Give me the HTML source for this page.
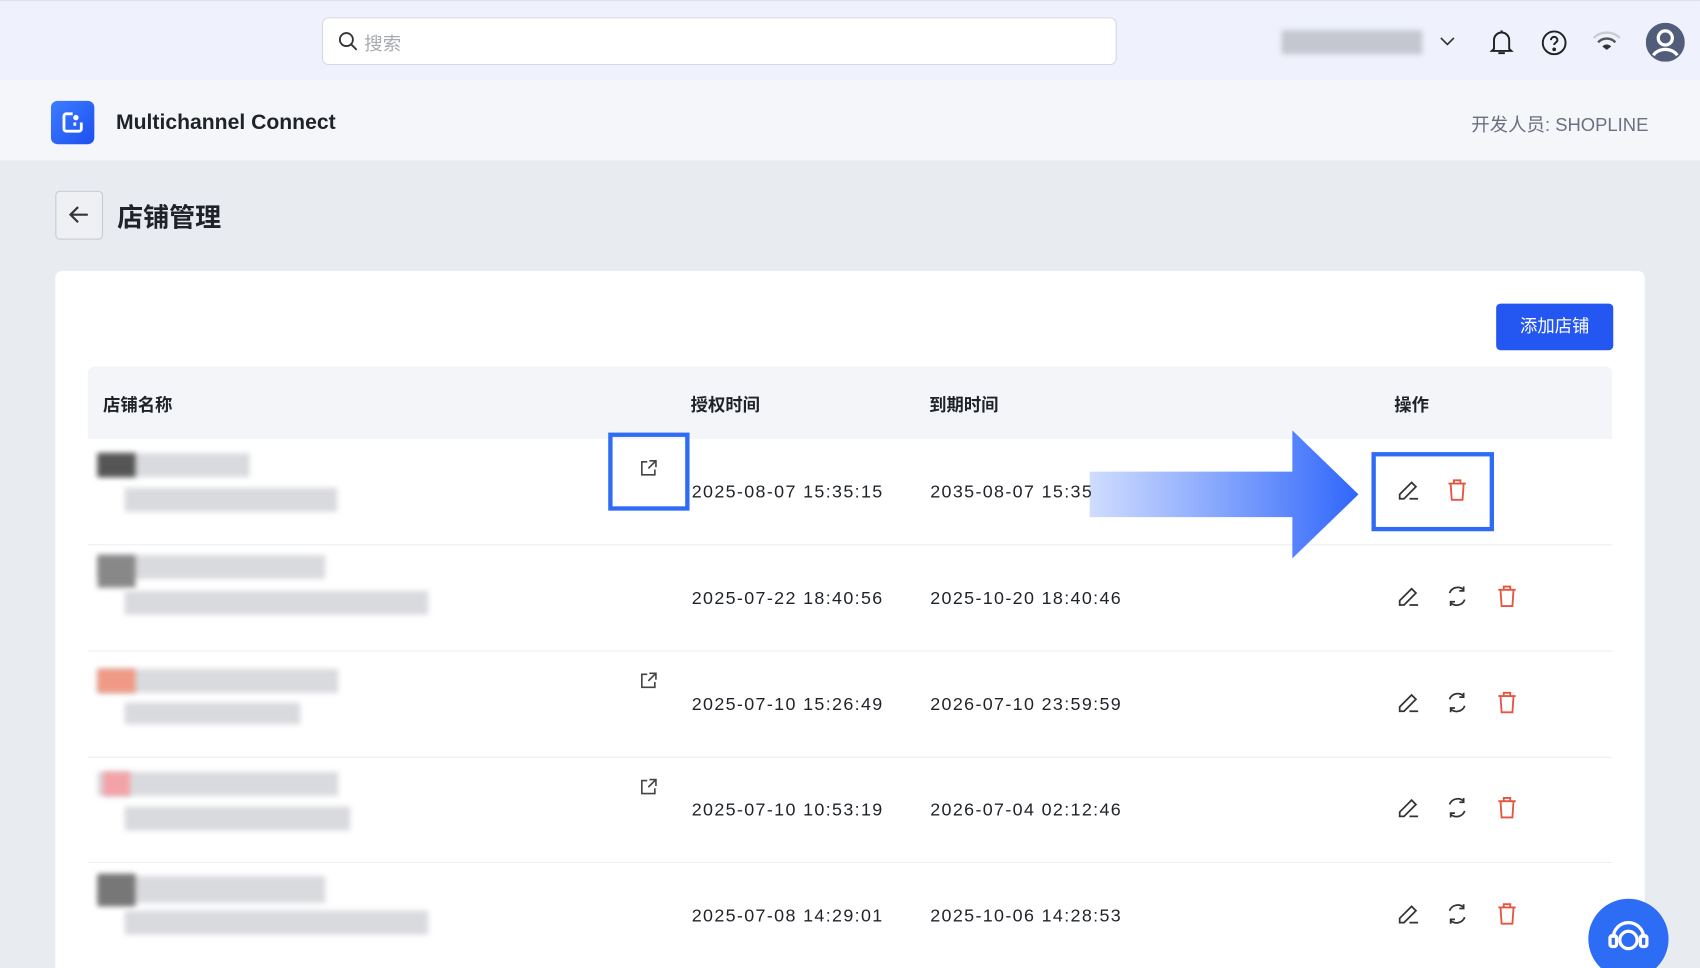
<!DOCTYPE html>
<html><head><meta charset="utf-8"><style>
html,body{margin:0;padding:0;width:1700px;height:968px;overflow:hidden;background:#e8ebf0}
#w{width:1568px;height:893px;transform:scale(1.08418);transform-origin:0 0;position:relative;font-family:"Liberation Sans","Noto Sans CJK SC",sans-serif;color:#1f2329}
.a{position:absolute}
.top{left:0;top:0;width:1568px;height:74px;background:#eff2fc;border-top:1px solid #dde0e8}
.sub{left:0;top:74px;width:1568px;height:74px;background:#f5f6fa}
.card{left:51px;top:250px;width:1466px;height:660px;background:#fff;border-radius:6px}
.th{left:81px;top:338px;width:1406px;height:67px;background:#f3f5f9;border-radius:6px 6px 0 0;font-size:16px;font-weight:bold}
.row{left:81px;width:1406px;border-bottom:1px solid #eceef2;height:97px}
.d{position:absolute;font-size:16.5px;color:#1f2329;letter-spacing:1.25px}
.blur{position:absolute;filter:blur(2.5px);background:#d9dade}
</style></head><body><div id="w">
<div class="a top">
 <div class="a" style="left:297px;top:15px;width:731px;height:42px;background:#fff;border:1px solid #d5d8e0;border-radius:6px">
  <svg class="a" style="left:14px;top:12px" width="18" height="18" viewBox="0 0 18 18" fill="none" stroke="#333" stroke-width="1.7"><circle cx="7.5" cy="7.5" r="6"/><path d="M12 12l5 5"/></svg>
  <span class="a" style="left:38px;top:9px;font-size:17px;color:#a8abb3">搜索</span>
 </div>
 <div class="blur" style="left:1182px;top:27px;width:130px;height:22px;background:#c4c6d0"></div>
 <svg class="a" style="left:1327px;top:31px" width="16" height="12" viewBox="0 0 16 12" fill="none" stroke="#333" stroke-width="1.6"><path d="M2 3l6 6 6-6"/></svg>
 <svg class="a" style="left:1373px;top:25px" width="24" height="26" viewBox="0 0 24 26" fill="none" stroke="#222" stroke-width="1.8"><path d="M5 19V11a7 7 0 0114 0v8l2 2H3z M12 2v2 M9 23h6"/></svg>
 <svg class="a" style="left:1421px;top:26px" width="25" height="25" viewBox="0 0 25 25" fill="none" stroke="#222" stroke-width="1.8"><circle cx="12.5" cy="12.5" r="10.5"/><path d="M9.5 10a3 3 0 116 0c0 2-3 2.5-3 4.5"/><circle cx="12.5" cy="18.5" r=".8" fill="#222"/></svg>
 <svg class="a" style="left:1468px;top:27px" width="28" height="22" viewBox="0 0 28 22"><path d="M2 7a17 17 0 0124 0" stroke="#c9cbd3" stroke-width="2.2" fill="none"/><path d="M6 11a11 11 0 0116 0" stroke="#555" stroke-width="2.2" fill="none"/><path d="M10 15a5 5 0 018 0l-4 3z" fill="#333"/></svg>
 <svg class="a" style="left:1518px;top:20px" width="36" height="36" viewBox="0 0 36 36"><circle cx="18" cy="18" r="18" fill="#515d7a"/><circle cx="18" cy="14" r="6.5" fill="none" stroke="#fff" stroke-width="3"/><path d="M7 30a12 9 0 0122 0" fill="none" stroke="#fff" stroke-width="3"/></svg>
</div>
<div class="a sub">
 <div class="a" style="left:47px;top:19px;width:40px;height:40px;border-radius:6px;background:linear-gradient(135deg,#3d7dff,#1c4ff0)">
  <svg class="a" style="left:9px;top:9px" width="22" height="22" viewBox="0 0 22 22" fill="none" stroke="#fff" stroke-width="2.6"><path d="M11 3H5a2 2 0 00-2 2v12a2 2 0 002 2h12a2 2 0 002-2v-6"/><path d="M13 11v3"/><circle cx="14" cy="6.5" r="1.2" fill="#fff"/></svg>
 </div>
 <span class="a" style="left:107px;top:28px;font-size:19.5px;font-weight:bold;color:#1f2329">Multichannel Connect</span>
 <span class="a" style="left:1357px;top:27px;font-size:17px;color:#6b7080">开发人员: SHOPLINE</span>
</div>
<div class="a" style="left:51px;top:176px;width:42px;height:43px;border:1px solid #c8cbd3;border-radius:4px;background:#eef0f4">
 <svg class="a" style="left:11px;top:12px" width="20" height="18" viewBox="0 0 20 18" fill="none" stroke="#333" stroke-width="2"><path d="M18 9H3 M9 2L2 9l7 7"/></svg>
</div>
<span class="a" style="left:108px;top:181px;font-size:24px;font-weight:bold">店铺管理</span>
<div class="a card"></div>
<div class="a" style="left:1380px;top:280px;width:108px;height:43px;background:#2457f2;border-radius:4px;color:#fff;font-size:16px;text-align:center;line-height:43px">添加店铺</div>
<div class="a th"><span class="a" style="left:14px;top:22px">店铺名称</span><span class="a" style="left:556px;top:22px">授权时间</span><span class="a" style="left:776px;top:22px">到期时间</span><span class="a" style="left:1205px;top:22px">操作</span></div>
<div class="a row" style="top:405px"></div>
<div class="a row" style="top:503px"></div>
<div class="a row" style="top:601px"></div>
<div class="a row" style="top:698px"></div>
<div class="a row" style="top:796px"></div>
<div class="blur" style="left:90px;top:418px;width:140px;height:22px"></div><div class="blur" style="left:90px;top:418px;width:35px;height:22px;background:#555"></div><div class="blur" style="left:115px;top:450px;width:196px;height:22px"></div>
<div class="blur" style="left:90px;top:512px;width:210px;height:22px"></div><div class="blur" style="left:90px;top:512px;width:35px;height:30px;background:#888"></div><div class="blur" style="left:115px;top:545px;width:280px;height:22px"></div>
<div class="blur" style="left:90px;top:617px;width:222px;height:22px"></div><div class="blur" style="left:90px;top:617px;width:35px;height:22px;background:#f09a85"></div><div class="blur" style="left:115px;top:648px;width:162px;height:20px"></div>
<div class="blur" style="left:90px;top:712px;width:222px;height:22px"></div><div class="blur" style="left:95px;top:712px;width:25px;height:22px;background:#f3a3a8"></div><div class="blur" style="left:115px;top:744px;width:208px;height:22px"></div>
<div class="blur" style="left:90px;top:808px;width:210px;height:25px"></div><div class="blur" style="left:90px;top:806px;width:35px;height:30px;background:#777"></div><div class="blur" style="left:115px;top:840px;width:280px;height:22px"></div>
<svg class="a" style="left:590px;top:424px" width="16" height="16" viewBox="0 0 16 16" fill="none" stroke="#444" stroke-width="1.5"><path d="M7 2H2v12h12V9 M9 1h6v6 M15 1L8 8"/></svg>
<svg class="a" style="left:590px;top:620px" width="16" height="16" viewBox="0 0 16 16" fill="none" stroke="#444" stroke-width="1.5"><path d="M7 2H2v12h12V9 M9 1h6v6 M15 1L8 8"/></svg>
<svg class="a" style="left:590px;top:718px" width="16" height="16" viewBox="0 0 16 16" fill="none" stroke="#444" stroke-width="1.5"><path d="M7 2H2v12h12V9 M9 1h6v6 M15 1L8 8"/></svg>
<div class="a" style="left:561px;top:399px;width:67px;height:64px;border:4px solid #2f6bf5"></div>
<span class="d" style="left:638px;top:445px">2025-08-07 15:35:15</span><span class="d" style="left:858px;top:445px">2035-08-07 15:35</span>
<span class="d" style="left:638px;top:543px">2025-07-22 18:40:56</span><span class="d" style="left:858px;top:543px">2025-10-20 18:40:46</span>
<span class="d" style="left:638px;top:641px">2025-07-10 15:26:49</span><span class="d" style="left:858px;top:641px">2026-07-10 23:59:59</span>
<span class="d" style="left:638px;top:738px">2025-07-10 10:53:19</span><span class="d" style="left:858px;top:738px">2026-07-04 02:12:46</span>
<span class="d" style="left:638px;top:836px">2025-07-08 14:29:01</span><span class="d" style="left:858px;top:836px">2025-10-06 14:28:53</span>
<svg class="a" style="left:1005px;top:397px" width="250" height="118" viewBox="0 0 250 118"><defs><linearGradient id="g" x1="0" x2="1"><stop offset="0" stop-color="#3f74fb" stop-opacity=".25"/><stop offset="1" stop-color="#2f66fb"/></linearGradient></defs><path d="M0 38H187V0L248 59 187 118V80H0z" fill="url(#g)"/></svg>
<div class="a" style="left:1265px;top:417px;width:105px;height:65px;border:4px solid #2f6bf5"></div>
<svg class="a" style="left:1288px;top:441px" width="22" height="22" viewBox="0 0 22 22" fill="none" stroke="#333" stroke-width="1.6"><path d="M3 19v-4L14 4l4 4L7 19z M12 19h8"/></svg>
<svg class="a" style="left:1334px;top:441px" width="20" height="22" viewBox="0 0 20 22" fill="none" stroke="#e5553f" stroke-width="1.7"><path d="M2 5h16 M7 5V2h6v3 M4 5l1 15h10l1-15"/></svg>
<div id="acts"></div>
<script>
var ys=[539,637,734,832],h='';
ys.forEach(function(y){h+='<svg class="a" style="left:1288px;top:'+y+'px" width="22" height="22" viewBox="0 0 22 22" fill="none" stroke="#333" stroke-width="1.6"><path d="M3 19v-4L14 4l4 4L7 19z M12 19h8"/></svg>'+
'<svg class="a" style="left:1333px;top:'+y+'px" width="22" height="22" viewBox="0 0 22 22" fill="none" stroke="#333" stroke-width="1.6"><path d="M4 8a8 8 0 0113-3 M18 14a8 8 0 01-13 3 M17 2v4h-4 M5 20v-4h4"/></svg>'+
'<svg class="a" style="left:1380px;top:'+y+'px" width="20" height="22" viewBox="0 0 20 22" fill="none" stroke="#e5553f" stroke-width="1.7"><path d="M2 5h16 M7 5V2h6v3 M4 5l1 15h10l1-15"/></svg>';});
document.getElementById('acts').innerHTML=h;
</script>
<div class="a" style="left:1465px;top:829px;width:74px;height:74px;border-radius:50%;background:#2d6cf5">
 <svg class="a" style="left:16px;top:14px" width="42" height="42" viewBox="0 0 42 42" fill="none" stroke="#fff" stroke-width="3"><path d="M7 22a14 14 0 0128 0"/><rect x="4" y="20" width="6" height="10" rx="2"/><rect x="32" y="20" width="6" height="10" rx="2"/><circle cx="21" cy="24" r="8"/></svg>
</div>
</div></body></html>
